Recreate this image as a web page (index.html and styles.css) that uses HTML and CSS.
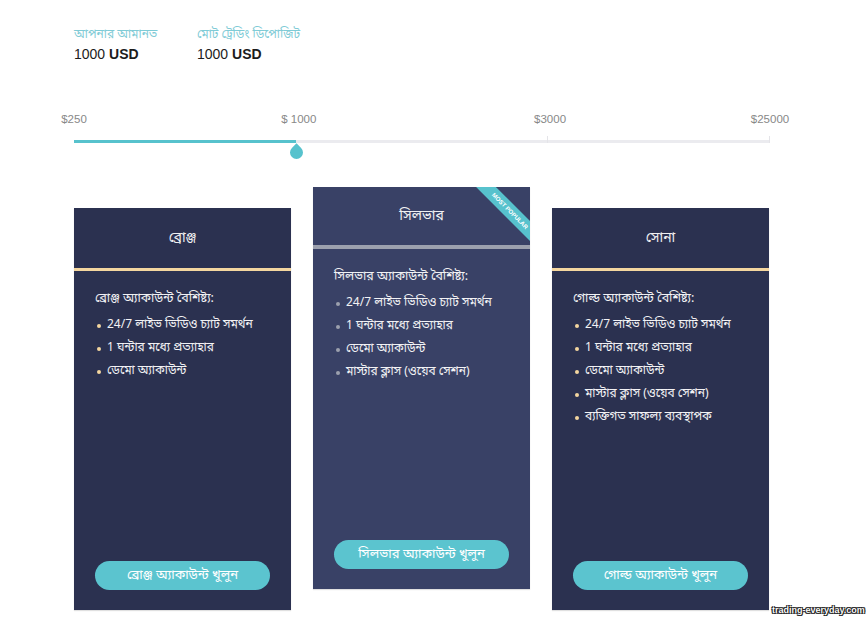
FILE: index.html
```html
<!DOCTYPE html>
<html lang="bn">
<head>
<meta charset="utf-8">
<title>Accounts</title>
<link rel="stylesheet" href="styles.css">
</head>
<body>
<div class="page">
  <div class="summary">
    <div class="stat">
      <div class="stat-label">আপনার আমানত</div>
      <div class="stat-value">1000 <b>USD</b></div>
    </div>
    <div class="stat">
      <div class="stat-label">মোট ট্রেডিং ডিপোজিট</div>
      <div class="stat-value">1000 <b>USD</b></div>
    </div>
  </div>

  <div class="slider">
    <div class="scale">
      <span class="mark" style="left:0%">$250</span>
      <span class="mark" style="left:32.3%">$ 1000</span>
      <span class="mark" style="left:68.4%">$3000</span>
      <span class="mark" style="left:100%">$25000</span>
    </div>
    <div class="track">
      <div class="fill" style="width:222px"></div>
      <span class="tick" style="left:473px"></span>
      <span class="tick" style="left:695px"></span>
      <span class="thumb" style="left:222px"></span>
    </div>
  </div>

  <div class="cards">
    <div class="card side">
      <div class="card-head gold-line">ব্রোঞ্জ</div>
      <div class="card-body">
        <div class="feat-title">ব্রোঞ্জ অ্যাকাউন্ট বৈশিষ্ট্য:</div>
        <ul class="feats warm">
          <li>24/7 লাইভ ভিডিও চ্যাট সমর্থন</li>
          <li>1 ঘন্টার মধ্যে প্রত্যাহার</li>
          <li>ডেমো অ্যাকাউন্ট</li>
        </ul>
        <a class="btn">ব্রোঞ্জ অ্যাকাউন্ট খুলুন</a>
      </div>
    </div>

    <div class="card silver">
      <div class="ribbon">MOST POPULAR</div>
      <div class="card-head gray-line">সিলভার</div>
      <div class="card-body">
        <div class="feat-title">সিলভার অ্যাকাউন্ট বৈশিষ্ট্য:</div>
        <ul class="feats cool">
          <li>24/7 লাইভ ভিডিও চ্যাট সমর্থন</li>
          <li>1 ঘন্টার মধ্যে প্রত্যাহার</li>
          <li>ডেমো অ্যাকাউন্ট</li>
          <li>মাস্টার ক্লাস (ওয়েব সেশন)</li>
        </ul>
        <a class="btn">সিলভার অ্যাকাউন্ট খুলুন</a>
      </div>
    </div>

    <div class="card side">
      <div class="card-head gold-line">সোনা</div>
      <div class="card-body">
        <div class="feat-title">গোল্ড অ্যাকাউন্ট বৈশিষ্ট্য:</div>
        <ul class="feats warm">
          <li>24/7 লাইভ ভিডিও চ্যাট সমর্থন</li>
          <li>1 ঘন্টার মধ্যে প্রত্যাহার</li>
          <li>ডেমো অ্যাকাউন্ট</li>
          <li>মাস্টার ক্লাস (ওয়েব সেশন)</li>
          <li>ব্যক্তিগত সাফল্য ব্যবস্থাপক</li>
        </ul>
        <a class="btn">গোল্ড অ্যাকাউন্ট খুলুন</a>
      </div>
    </div>
  </div>
</div>
<div class="watermark">trading-everyday.com</div>
</body>
</html>
```

FILE: styles.css
```css
* { box-sizing: border-box; }
html, body { margin: 0; padding: 0; background: #fff; }
body {
  width: 867px;
  height: 623px;
  overflow: hidden;
  position: relative;
  font-family: "Noto Sans Bengali", "Lohit Bengali", "Liberation Sans", "Noto Sans", sans-serif;
}
.page { padding: 26px 0 0 74px; }

.summary { display: flex; gap: 0; }
.stat { width: 123px; }
.stat-label { font-size: 12px; color: #7fcbd6; line-height: 16px; height: 16px; margin-top: 1px; }
.stat-value {
  margin-top: 2px;
  font-family: "Liberation Sans", Arial, sans-serif;
  font-size: 14px;
  color: #1c1c1c;
  line-height: 18px;
}
.stat-value b { font-weight: bold; }

.slider { width: 696px; margin-top: 48px; }
.scale { position: relative; height: 16px; }
.mark {
  position: absolute;
  top: 0;
  transform: translateX(-50%);
  font-family: "Liberation Sans", Arial, sans-serif;
  font-size: 11.5px;
  color: #888;
  line-height: 16px;
  white-space: nowrap;
}
.track {
  position: relative;
  margin-top: 13px;
  height: 3px;
  background: #ebebef;
}
.fill { height: 3px; background: #57c2cd; }
.tick {
  position: absolute;
  bottom: 0;
  width: 1px;
  height: 7px;
  background: #e4e4e8;
}
.thumb {
  position: absolute;
  top: 6px;
  width: 13px;
  height: 13px;
  margin-left: -6px;
  background: #57c2cd;
  border-radius: 0 50% 50% 50%;
  transform: rotate(45deg);
}

.cards { display: flex; gap: 22px; margin-top: 44px; align-items: flex-start; }
.card {
  width: 217px;
  height: 402px;
  display: flex;
  flex-direction: column;
  background: #2b3150;
  color: #f2f2f4;
  position: relative;
  overflow: hidden;
  box-shadow: 0 1px 1px rgba(0,0,0,0.12);
}
.card.side { margin-top: 21px; }
.card.silver { background: #394166; }
.card-head {
  height: 63px;
  display: flex;
  align-items: center;
  justify-content: center;
  font-size: 14px;
  color: #f0f0f2;
}
.gold-line { border-bottom: 3px solid #f4d69f; }
.gray-line { height: 62px; border-bottom: 4px solid #9ca0ae; }
.card-body {
  flex: 1;
  display: flex;
  flex-direction: column;
  padding: 19px 21px 20px 21px;
}
.feat-title { font-size: 12.5px; line-height: 18px; }
.feats {
  list-style: none;
  margin: 6px 0 0 0;
  padding: 0;
  flex: 1;
}
.feats li {
  position: relative;
  font-size: 12px;
  line-height: 23px;
  padding-left: 12px;
}
.feats li::before {
  content: "";
  position: absolute;
  left: 2px;
  top: 10px;
  width: 4px;
  height: 4px;
  border-radius: 50%;
}
.warm li::before { background: #f4d69f; }
.cool li::before { background: #9ca0ae; }

.btn {
  display: flex;
  align-items: center;
  justify-content: center;
  height: 29px;
  width: 175px;
  border-radius: 15px;
  background: #5bc4cf;
  color: #fff;
  font-size: 13px;
}

.ribbon {
  position: absolute;
  top: 17px;
  right: -26px;
  width: 92px;
  height: 14px;
  background: #57c2cd;
  color: #fff;
  font-family: "Liberation Sans", Arial, sans-serif;
  font-weight: bold;
  font-size: 6px;
  line-height: 14px;
  text-align: center;
  transform: rotate(45deg);
}

.watermark {
  position: absolute;
  left: 772px;
  top: 605px;
  font-family: "Liberation Sans", Arial, sans-serif;
  font-size: 9px;
  font-weight: bold;
  color: #fff;
  text-shadow: 0 0 1px #000, 0 0 1px #000, 1px 1px 0 #333, -1px -1px 0 #333, 1px -1px 0 #333, -1px 1px 0 #333;
}
```
